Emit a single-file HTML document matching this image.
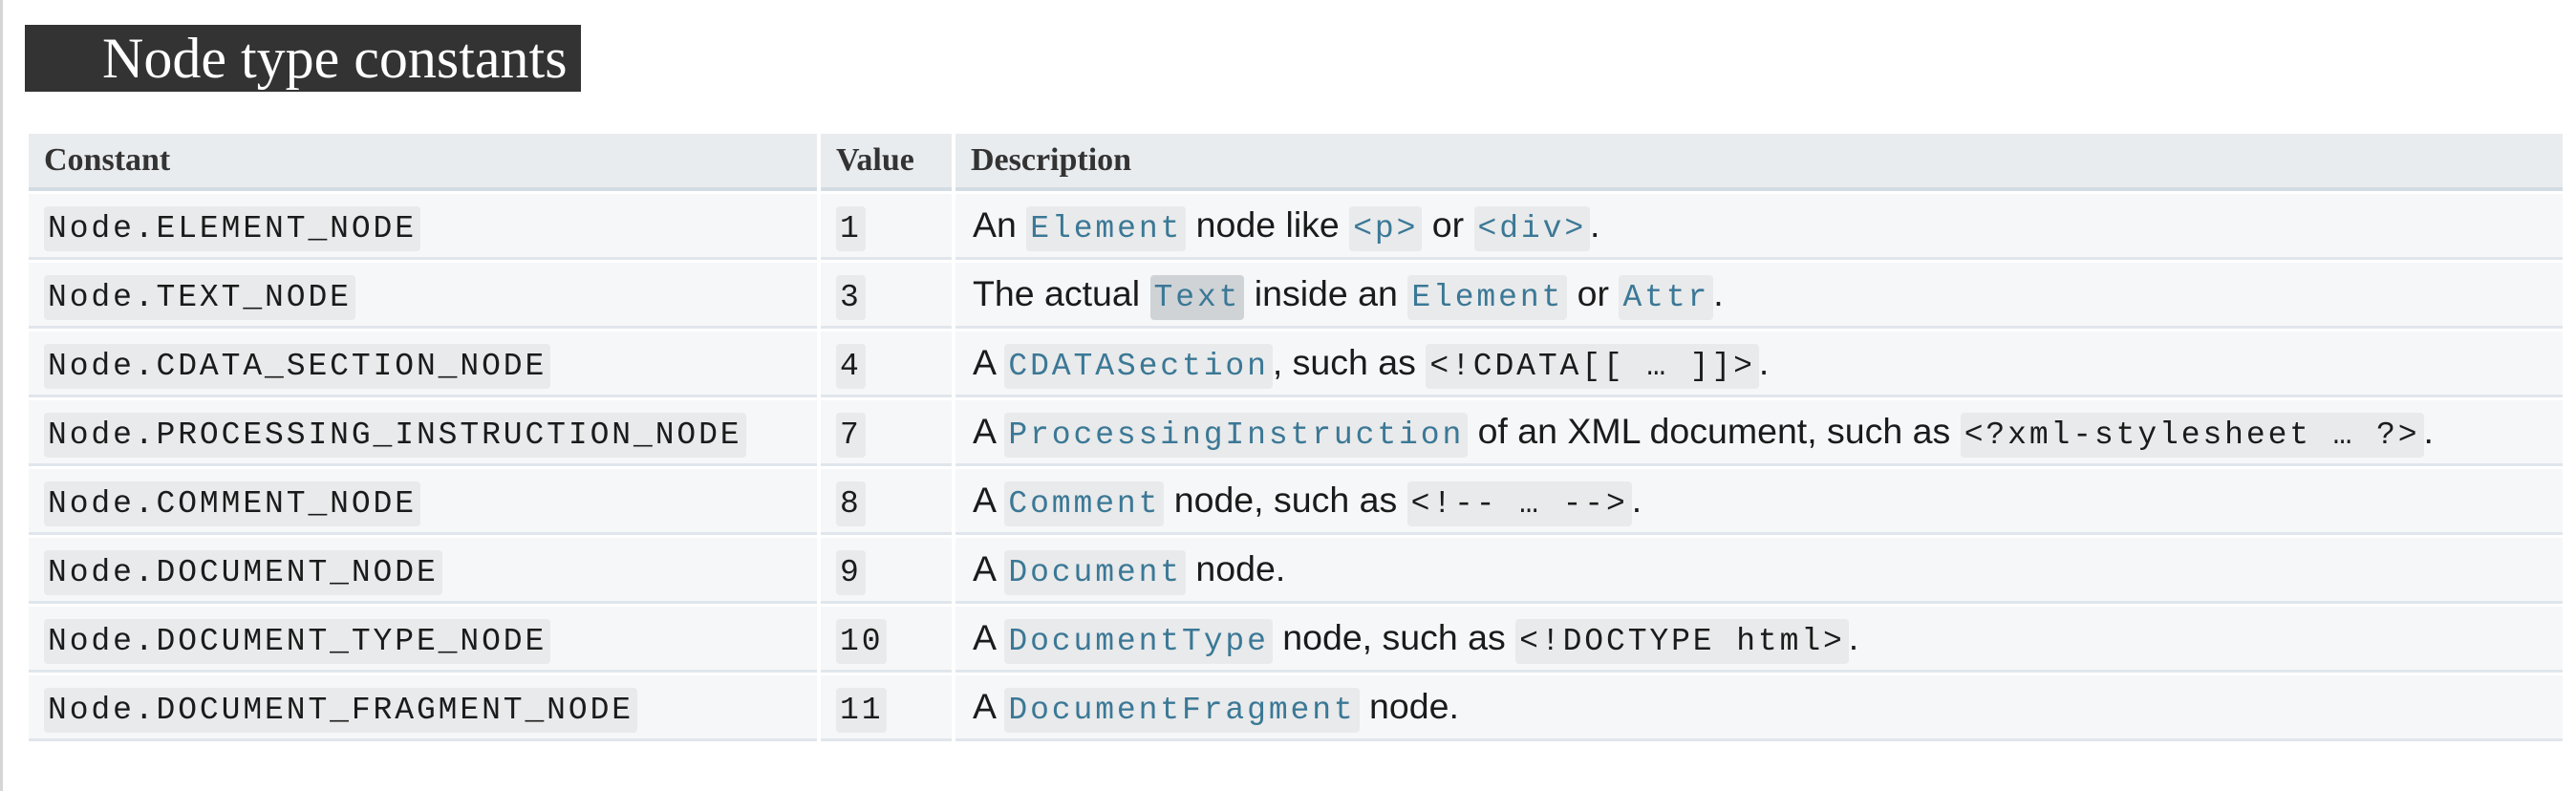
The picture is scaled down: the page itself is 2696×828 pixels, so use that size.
<!DOCTYPE html>
<html><head><meta charset="utf-8"><style>
html,body{margin:0;padding:0;background:#fff;width:2696px;height:828px;overflow:hidden}
body{position:relative;font-family:"Liberation Sans",Arial,sans-serif;color:#1b1b1b}
.lb{position:absolute;left:0;top:0;width:3px;height:828px;background:#d6d6d6}
h2{position:absolute;left:26px;top:26px;width:582px;height:70px;margin:0;background:#333;color:#fff;
font-family:"Liberation Serif",serif;font-weight:normal;font-size:60px;line-height:70px;padding-left:81px;box-sizing:border-box;white-space:nowrap;overflow:hidden}
table{position:absolute;left:26px;top:137px;border-collapse:separate;border-spacing:4px 3px;width:2660px}
th{background:#e9ecef;border-bottom:4px solid #d4dce3;height:56px;text-align:left;padding:0 0 0 16px;
font-family:"Liberation Serif",serif;font-weight:bold;font-size:34px;color:#333}
td{background:#f6f7f9;border-bottom:3px solid #e0e6ec;height:66px;padding:0 0 0 16px;font-size:37.5px;white-space:nowrap}
td.d{padding-left:18px}
code{font-family:"Liberation Mono",monospace;font-size:33px;letter-spacing:2.9px;background:#e9eaeb;padding:5px 4px;border-radius:4px;color:#1b1b1b}
code.l{color:#3b7896}
code.h{background:#cfd3d6}
</style></head><body>
<div class="lb"></div>
<h2>Node type constants</h2>
<table>
<colgroup><col style="width:825px"><col style="width:137px"><col></colgroup>
<tr><th>Constant</th><th>Value</th><th>Description</th></tr>
<tr><td><code>Node.ELEMENT_NODE</code></td><td><code>1</code></td><td class="d">An <code class="l">Element</code> node like <code class="l">&lt;p&gt;</code> or <code class="l">&lt;div&gt;</code>.</td></tr>
<tr><td><code>Node.TEXT_NODE</code></td><td><code>3</code></td><td class="d">The actual <code class="l h">Text</code> inside an <code class="l">Element</code> or <code class="l">Attr</code>.</td></tr>
<tr><td><code>Node.CDATA_SECTION_NODE</code></td><td><code>4</code></td><td class="d">A <code class="l">CDATASection</code>, such as <code>&lt;!CDATA[[ … ]]&gt;</code>.</td></tr>
<tr><td><code>Node.PROCESSING_INSTRUCTION_NODE</code></td><td><code>7</code></td><td class="d">A <code class="l">ProcessingInstruction</code> of an XML document, such as <code>&lt;?xml-stylesheet … ?&gt;</code>.</td></tr>
<tr><td><code>Node.COMMENT_NODE</code></td><td><code>8</code></td><td class="d">A <code class="l">Comment</code> node, such as <code>&lt;!-- … --&gt;</code>.</td></tr>
<tr><td><code>Node.DOCUMENT_NODE</code></td><td><code>9</code></td><td class="d">A <code class="l">Document</code> node.</td></tr>
<tr><td><code>Node.DOCUMENT_TYPE_NODE</code></td><td><code>10</code></td><td class="d">A <code class="l">DocumentType</code> node, such as <code>&lt;!DOCTYPE html&gt;</code>.</td></tr>
<tr><td><code>Node.DOCUMENT_FRAGMENT_NODE</code></td><td><code>11</code></td><td class="d">A <code class="l">DocumentFragment</code> node.</td></tr>
</table>
</body></html>
